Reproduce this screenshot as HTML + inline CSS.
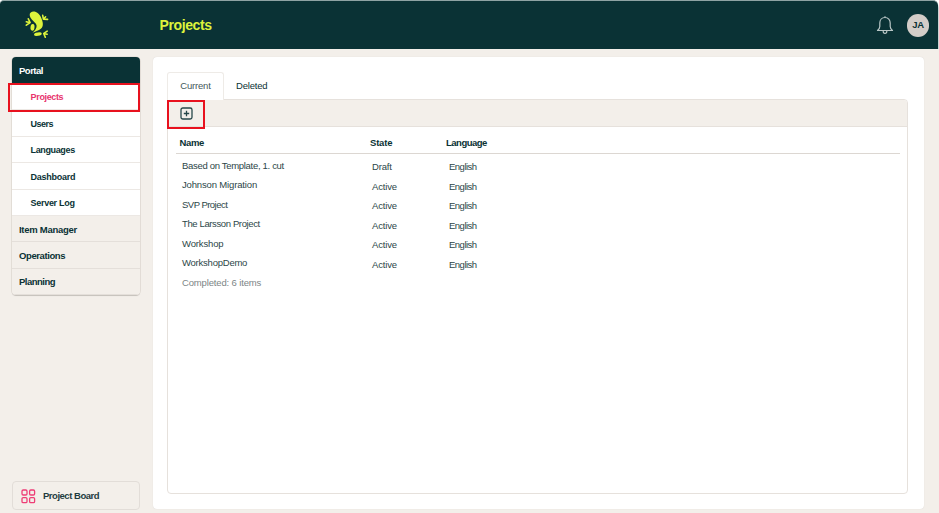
<!DOCTYPE html>
<html lang="en">
<head>
<meta charset="utf-8">
<title>Projects</title>
<style>
*{box-sizing:border-box;margin:0;padding:0}
html,body{width:939px;height:513px;overflow:hidden;background:#fff}
body{font-family:"Liberation Sans",sans-serif;color:#0a3235;position:relative}
#app{position:absolute;left:0;top:0;width:939px;height:513px;background:#f3efea;overflow:hidden}
#hdr{position:absolute;left:0;top:0;width:938px;height:49px;background:#0a3235;border-top:1px solid #8fa3a4;border-radius:4px 5px 0 0}#hdrbg{position:absolute;left:0;top:0;width:939px;height:49px;background:linear-gradient(#fff 0,#fff 4px,#c9d3d3 8px,#c9d3d3 100%)}
#title{position:absolute;left:159.500px;top:17px;font-size:14px;font-weight:bold;color:#ddf33c;line-height:16px;letter-spacing:-0.4px}
#avatar{position:absolute;left:906.600px;top:14px;width:22.800px;height:22.800px;border-radius:50%;background:#d3cdc8;color:#0a3235;font-size:9.500px;font-weight:bold;text-align:center;line-height:22px;letter-spacing:-0.3px}
#bell{position:absolute;left:875px;top:15.300px}
#logo{position:absolute;left:20px;top:5px}
#side{position:absolute;left:12px;top:57px;width:128px;height:238px;border-radius:4px;overflow:hidden;box-shadow:0 0 0 .6px rgba(60,40,20,.13),0 1px 1px rgba(0,0,0,.15)}
#side .h{height:27px;background:#0a3235;color:#fff;font-size:9.5px;font-weight:bold;line-height:28px;padding-left:7px;letter-spacing:-0.2px}
#side .s{height:26.4px;background:#fff;border-bottom:1px solid #ece8e4;font-size:9px;font-weight:bold;line-height:27.500px;padding-left:18.600px;color:#0a3235;letter-spacing:-0.1px}
#side .g{height:26.4px;background:#f3efea;border-bottom:1px solid #e4dfda;font-size:9.5px;font-weight:bold;line-height:27px;padding-left:7px;color:#0a3235;letter-spacing:-0.2px}
#side .act{color:#e8336d}
#red1{position:absolute;left:8px;top:83px;width:132px;height:29px;border:2px solid #e8111e}
#pb{position:absolute;left:11.500px;top:481px;width:128.500px;height:29px;border:1px solid #e2ddd8;border-radius:4px;font-size:9.5px;font-weight:bold;line-height:28px;padding-left:30.500px;letter-spacing:-0.48px;color:#1f3c3f}
#pbi{position:absolute;left:21px;top:489px}
#card{position:absolute;left:153px;top:57px;width:771px;height:452px;background:#fff;border-radius:4px;box-shadow:0 0 1px rgba(0,0,0,.15)}
#tab1{position:absolute;left:167px;top:72px;width:57px;height:27.500px;border:1px solid #eeebe7;border-bottom:none;border-radius:3px 3px 0 0;background:#fff;font-size:9.5px;line-height:26px;text-align:center;color:#44595b;letter-spacing:-0.2px}
#tab2{position:absolute;left:236px;top:73px;font-size:9.5px;line-height:26px;color:#0a3235;letter-spacing:-0.2px}
#panel{position:absolute;left:167px;top:99px;width:741px;height:395px;border:1px solid #e6e1dc;border-radius:4px;background:#fff}
#tool{position:absolute;left:168px;top:100px;width:739px;height:27px;background:#f3efea;border-radius:3px 3px 0 0;border-bottom:1px solid #e6e1dc}
#red2{position:absolute;left:167px;top:100px;width:38px;height:29px;border:2px solid #e8111e}
#plus{position:absolute;left:180px;top:107px}
.th{position:absolute;top:137.200px;font-size:9.5px;font-weight:bold;line-height:12px;letter-spacing:-0.2px}
#hr{position:absolute;left:176px;top:153px;width:724px;height:1px;background:#dcd7d2}
.r{position:absolute;font-size:9.5px;line-height:12px;color:#2c4648;letter-spacing:-0.15px;white-space:nowrap}
.c1{left:182px}.c2{left:372px}.c3{left:449px;letter-spacing:-0.5px}
</style>
</head>
<body>
<div id="app">
<div id="hdrbg"></div><div id="hdr"></div>
<svg id="logo" width="36" height="40" viewBox="0 0 36 40"><g fill="#ddf33c"><path d="M9.700 10.100C9.500 7.500 12 6.200 14.500 6.600C18.500 7.200 21.500 12 22.600 17C23.300 20.500 22.500 23.500 19 25C16.500 26 14.500 27 12.500 27.800C15 25.500 17 23 16.600 20.500C16.200 18.300 13.500 16.500 12 14.800C10.700 13.300 9.900 11.800 9.700 10.100Z"/><ellipse cx="12.500" cy="22.300" rx="2" ry="3.400" transform="rotate(6 12.500 22.300)"/><ellipse cx="17.900" cy="29.100" rx="3.900" ry="1.700" transform="rotate(-8 17.900 29.100)"/></g><g fill="none" stroke="#ddf33c" stroke-width="1.600" stroke-linecap="round"><path d="M10.100 17.500L8.300 13.800M9.800 17.600L6.300 16.800M9.800 17.800L6.300 20.200"/><path d="M23.400 14L22.700 10.300M23.600 14L25.600 11.800M23.600 14.200L27.600 14.400"/><path d="M23.800 28.400L27.200 26.200M23.800 28.600L27.200 29.200M23.800 28.800L25.300 32.200"/></g></svg>
<div id="title">Projects</div>
<svg id="bell" width="20" height="22" viewBox="0 0 20 22" fill="none" stroke="#b9c6c6" stroke-width="1.200" stroke-linecap="round" stroke-linejoin="round"><path d="M10 1.700v.8M10 2.500c-3.200 0-5.200 2.400-5.200 5.500v3.400c0 1.700-.9 2.900-2.300 4.100h15c-1.400-1.200-2.300-2.400-2.300-4.100V8c0-3.100-2-5.500-5.200-5.500z"/><path d="M8.200 16.200c0 1.200.8 2.100 1.800 2.100s1.800-.9 1.800-2.100"/></svg>
<div id="avatar">JA</div>

<div id="side">
<div class="h" style="letter-spacing:-0.5px">Portal</div>
<div class="s act" style="letter-spacing:-0.36px">Projects</div>
<div class="s" style="letter-spacing:-0.5px;position:relative"><span style="position:relative;top:0.700px">Users</span></div>
<div class="s" style="letter-spacing:-0.37px">Languages</div>
<div class="s" style="letter-spacing:-0.25px"><span style="position:relative;top:0.400px">Dashboard</span></div>
<div class="s" style="letter-spacing:-0.3px">Server Log</div>
<div class="g" style="letter-spacing:-0.28px">Item Manager</div>
<div class="g" style="letter-spacing:-0.4px">Operations</div>
<div class="g" style="letter-spacing:-0.5px"><span style="position:relative;top:-0.700px">Planning</span></div>
</div>
<div id="red1"></div>

<div id="pb">Project Board</div>
<svg id="pbi" width="15" height="15" viewBox="0 0 15 15" fill="none" stroke="#ee3d76" stroke-width="1.300"><rect x="1" y="1" width="5" height="5" rx="1.200"/><rect x="8.600" y="1" width="5" height="5" rx="1.200"/><rect x="1" y="8.600" width="5" height="5" rx="1.200"/><rect x="8.600" y="8.600" width="5" height="5" rx="1.200"/></svg>

<div id="card"></div>
<div id="panel"></div>
<div id="tool"></div>
<div id="tab1">Current</div>
<div id="tab2">Deleted</div>
<svg id="plus" width="13" height="13" viewBox="0 0 13 13" fill="none" stroke="#27474a" stroke-width="1.300"><rect x="1" y="1" width="11" height="11" rx="1.800"/><path d="M6.500 3.800v5.400M3.800 6.500h5.400"/></svg>
<div id="red2"></div>

<div class="th" style="left:179.400px;letter-spacing:-0.3px">Name</div>
<div class="th" style="left:370px">State</div>
<div class="th" style="left:446px;letter-spacing:-0.5px">Language</div>
<div id="hr"></div>

<div class="r c1" style="top:160px;letter-spacing:-0.31px">Based on Template, 1. cut</div><div class="r c2" style="top:161px">Draft</div><div class="r c3" style="top:161px">English</div>
<div class="r c1" style="top:179px">Johnson Migration</div><div class="r c2" style="top:181px">Active</div><div class="r c3" style="top:181px">English</div>
<div class="r c1" style="top:199px;letter-spacing:-0.52px">SVP Project</div><div class="r c2" style="top:200px">Active</div><div class="r c3" style="top:200px">English</div>
<div class="r c1" style="top:218px;letter-spacing:-0.38px">The Larsson Project</div><div class="r c2" style="top:220px">Active</div><div class="r c3" style="top:220px">English</div>
<div class="r c1" style="top:238px">Workshop</div><div class="r c2" style="top:239px">Active</div><div class="r c3" style="top:239px">English</div>
<div class="r c1" style="top:257px;letter-spacing:-0.23px">WorkshopDemo</div><div class="r c2" style="top:259px">Active</div><div class="r c3" style="top:259px">English</div>
<div class="r c1" style="top:277px;color:#7d8586">Completed: 6 items</div>
</div>
</body>
</html>
